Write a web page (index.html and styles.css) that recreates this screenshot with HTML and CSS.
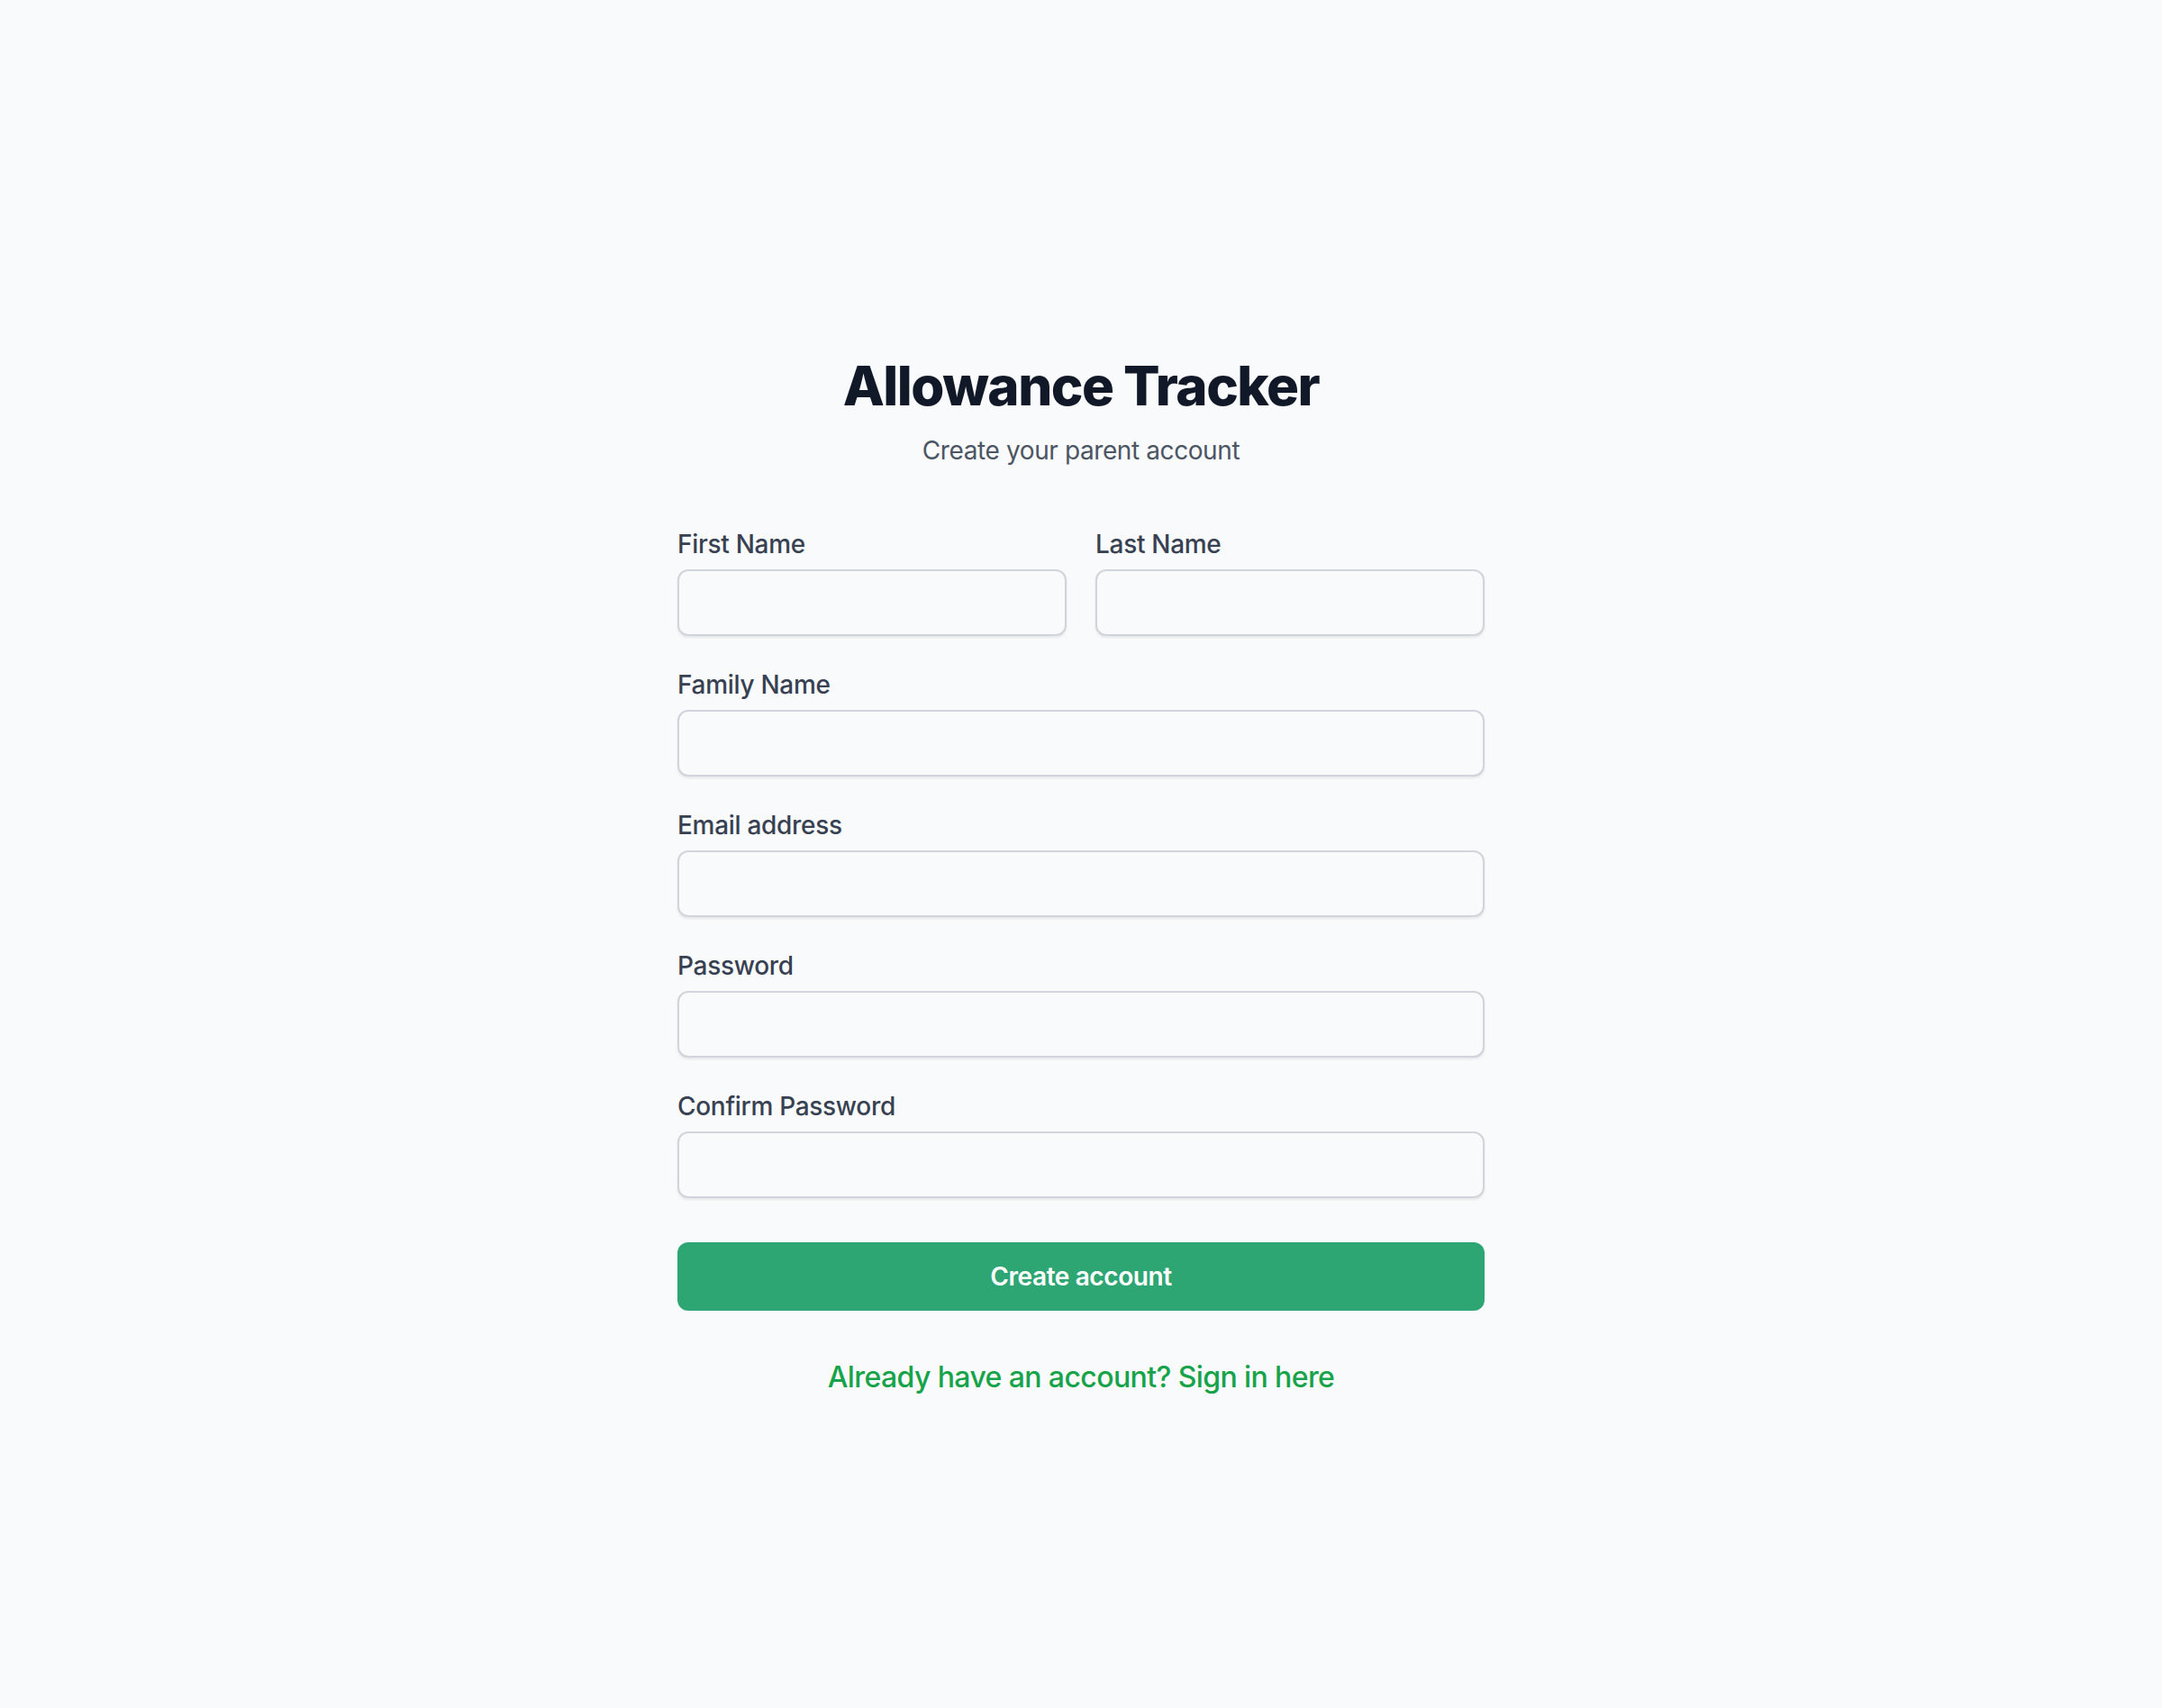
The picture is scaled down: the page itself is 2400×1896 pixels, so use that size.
FILE: index.html
```html
<!DOCTYPE html>
<html lang="en">
<head>
<meta charset="utf-8">
<title>Allowance Tracker - Sign up</title>
<link rel="stylesheet" href="styles.css">
</head>
<body>
<main class="page">
  <div class="panel">
    <header class="head">
      <h1 class="title">Allowance Tracker</h1>
      <p class="subtitle">Create your parent account</p>
    </header>
    <form class="form">
      <div class="row-2">
        <div class="field">
          <label class="label" for="first">First Name</label>
          <input class="input" id="first" type="text">
        </div>
        <div class="field">
          <label class="label" for="last">Last Name</label>
          <input class="input" id="last" type="text">
        </div>
      </div>
      <div class="field">
        <label class="label" for="family">Family Name</label>
        <input class="input" id="family" type="text">
      </div>
      <div class="field">
        <label class="label" for="email">Email address</label>
        <input class="input" id="email" type="email">
      </div>
      <div class="field">
        <label class="label" for="pw">Password</label>
        <input class="input" id="pw" type="password">
      </div>
      <div class="field">
        <label class="label" for="pw2">Confirm Password</label>
        <input class="input" id="pw2" type="password">
      </div>
      <button class="btn" type="button">Create account</button>
    </form>
    <div class="foot">
      <a class="link" href="#">Already have an account? Sign in here</a>
    </div>
  </div>
</main>
</body>
</html>
```

FILE: styles.css
```css
* { box-sizing: border-box; }
html, body { margin: 0; padding: 0; }
body {
  background: #f9fafb;
  font-family: Inter, "Noto Sans", "Liberation Sans", sans-serif;
  color: #111827;
  min-height: 1896px;
}
.page {
  display: flex;
  justify-content: center;
  padding-top: 392px;
}
.panel {
  width: 896px;
  display: flex;
  flex-direction: column;
}
.head {
  text-align: center;
}
.title {
  margin: 0;
  font-size: 60px;
  line-height: 72px;
  font-weight: 800;
  letter-spacing: -1.5px;
  color: #111827;
}
.subtitle {
  margin: 16px 0 0;
  font-size: 28px;
  line-height: 40px;
  letter-spacing: -0.4px;
  color: #4b5563;
}
.form {
  margin-top: 64px;
  display: flex;
  flex-direction: column;
  gap: 34px;
}
.row-2 {
  display: grid;
  grid-template-columns: 1fr 1fr;
  gap: 32px;
}
.field {
  display: flex;
  flex-direction: column;
}
.label {
  font-size: 28px;
  line-height: 40px;
  font-weight: 500;
  letter-spacing: -0.3px;
  color: #374151;
}
.input {
  margin-top: 8px;
  height: 74px;
  width: 100%;
  border: 2px solid #d1d5db;
  border-radius: 12px;
  background: #f9fafb;
  box-shadow: 0 2px 3px rgba(0, 0, 0, 0.08);
  padding: 16px 24px;
  font: inherit;
  font-size: 28px;
  outline: none;
}
.btn {
  margin-top: 15px;
  height: 76px;
  width: 100%;
  border: 0;
  border-radius: 12px;
  background: #2ea673;
  color: #ffffff;
  font-family: inherit;
  font-size: 28px;
  font-weight: 600;
  line-height: 40px;
  letter-spacing: -0.4px;
  cursor: pointer;
}
.foot {
  margin-top: 50px;
  text-align: center;
}
.link {
  font-size: 32px;
  line-height: 48px;
  font-weight: 500;
  letter-spacing: -0.6px;
  color: #16a34a;
  text-decoration: none;
}
```
